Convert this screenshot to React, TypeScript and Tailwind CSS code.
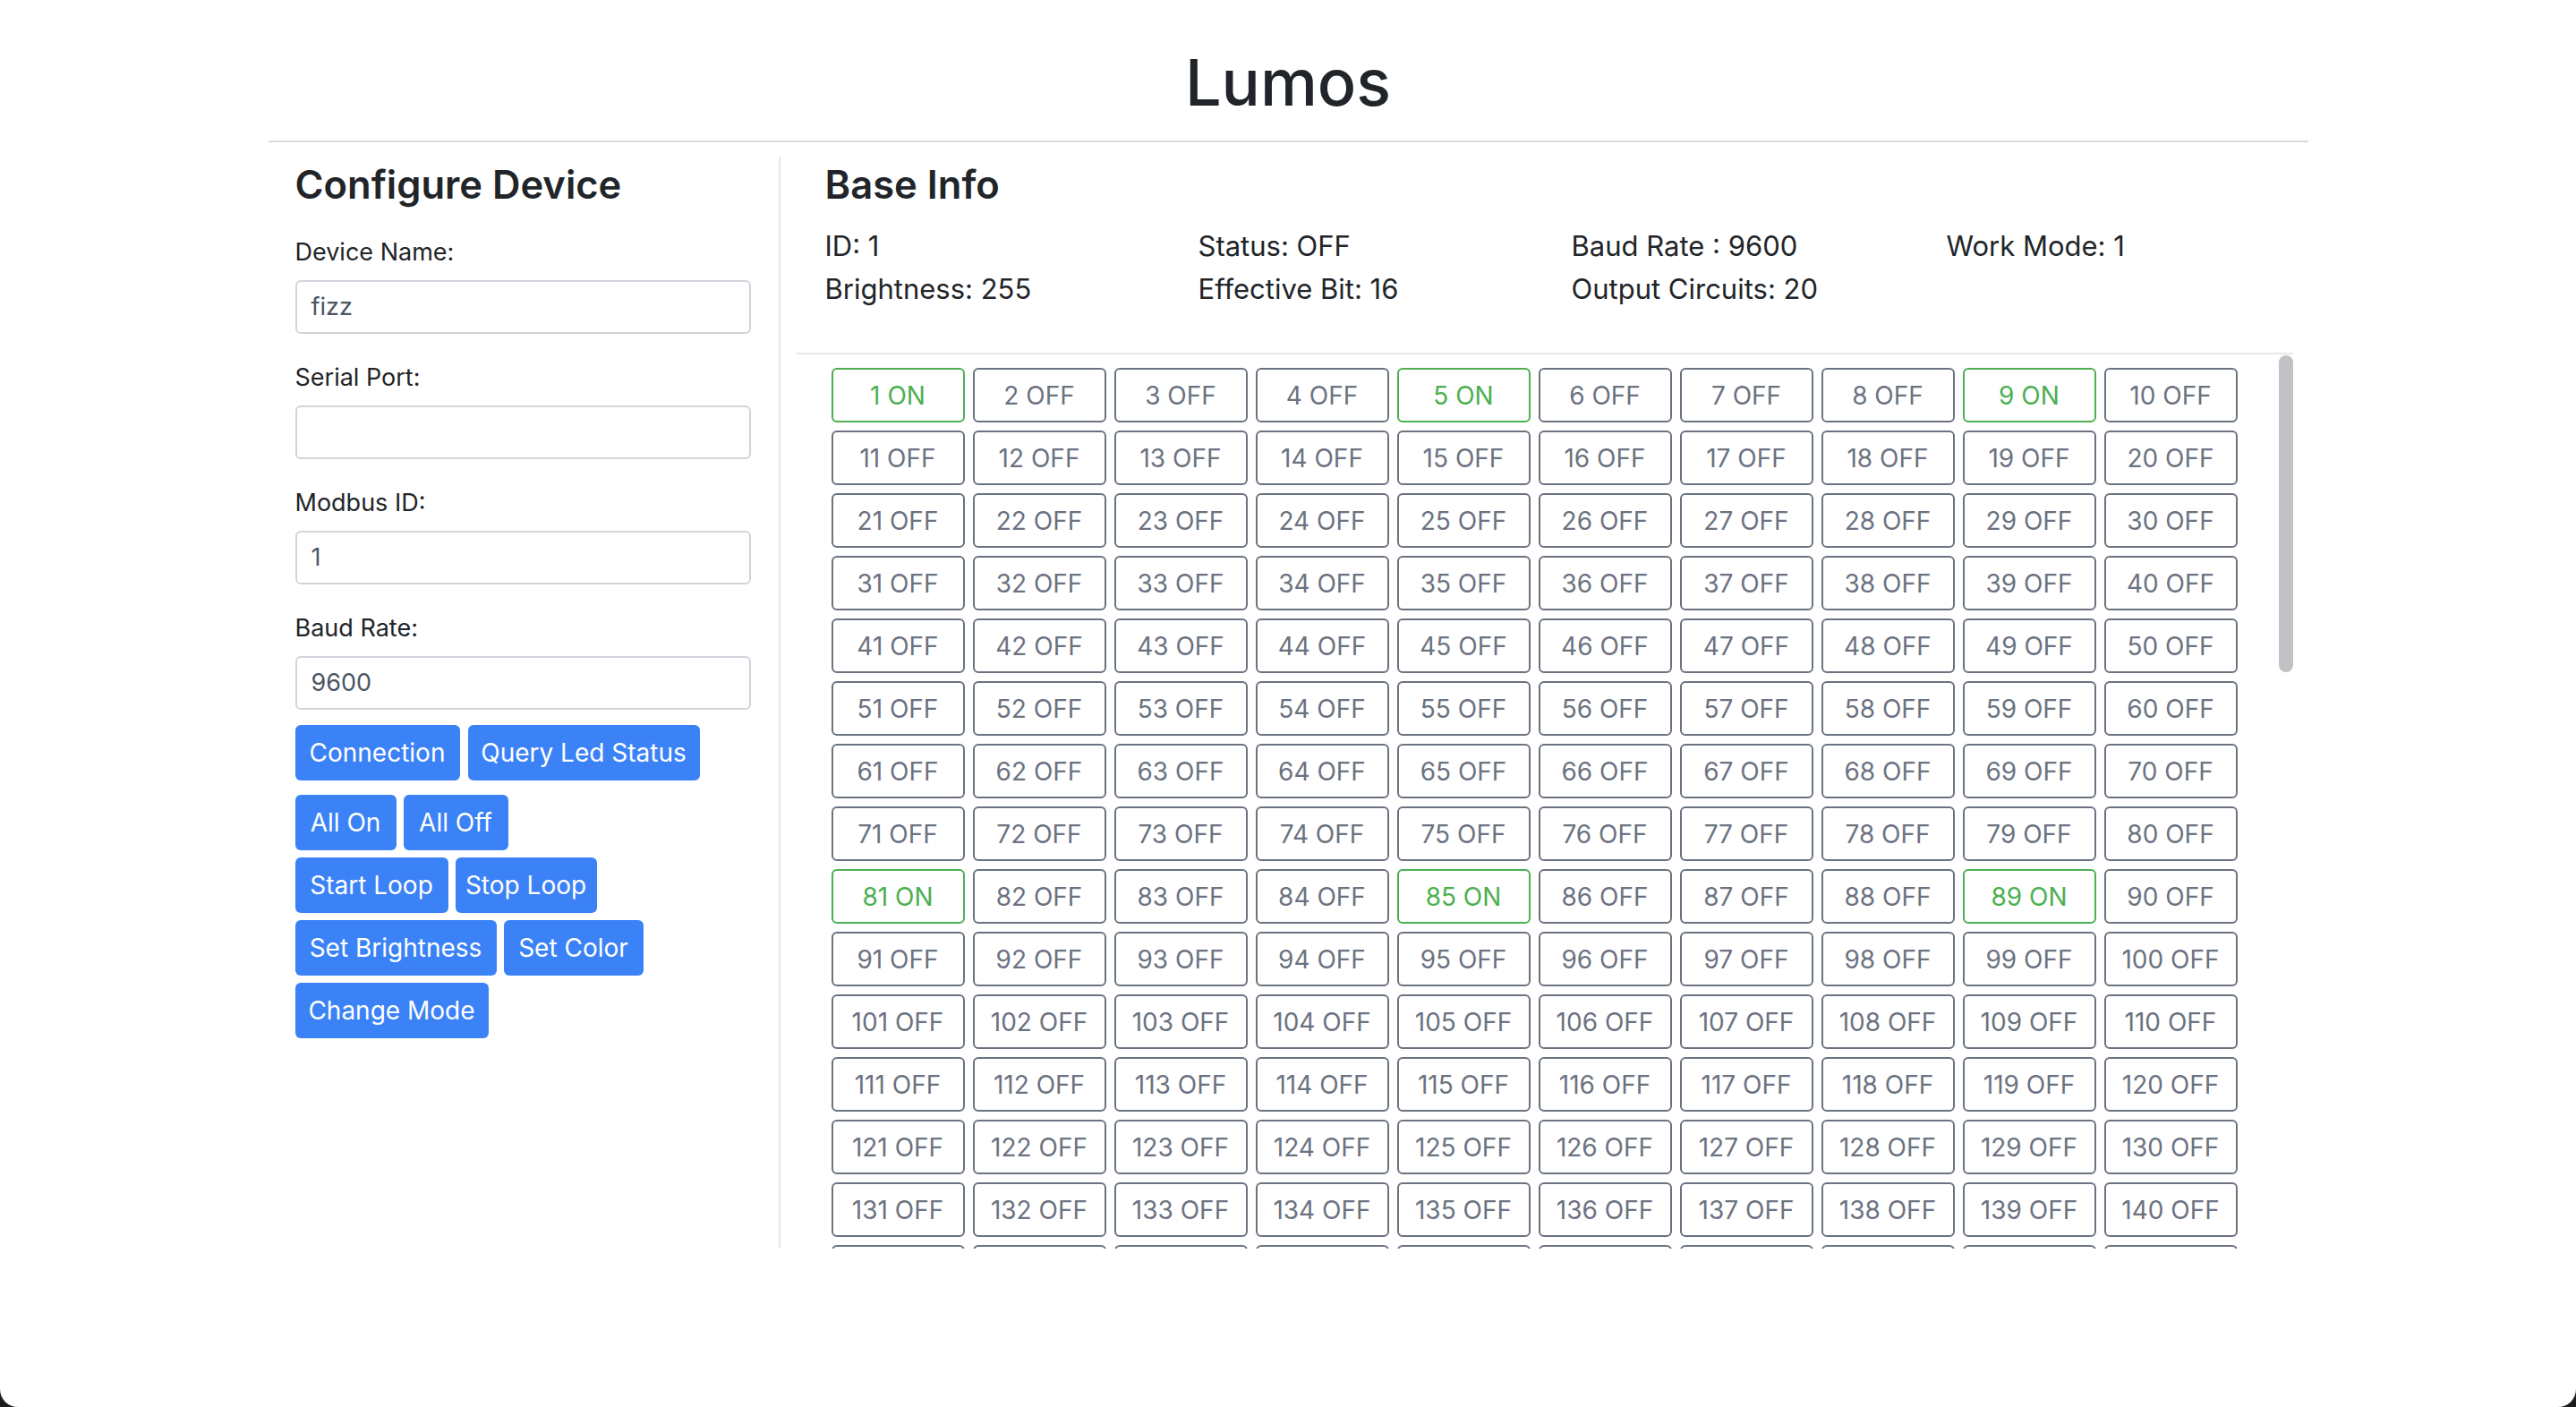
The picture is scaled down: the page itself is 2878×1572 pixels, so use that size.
import React from "react";

const ON = new Set([1, 5, 9, 81, 85, 89]);
const LEDS = Array.from({ length: 400 }, (_, i) => i + 1);

function Field({ label, value }: { label: string; value: string }) {
  return (
    <div className="mb-[28px]">
      <div className="text-[27px] leading-[42px] text-[#212529] mb-[10px]">{label}</div>
      <div className="h-[60px] border-2 border-[#d1d5db] rounded-[6px] pl-[16px] flex items-center text-[27px] text-[#4b5563]">
        {value}
      </div>
    </div>
  );
}

function Btn({ children, w }: { children: React.ReactNode; w: string }) {
  return (
    <div className={`${w} h-[62px] flex items-center justify-center bg-[#3b82f6] text-white text-[28px] rounded-[6px] whitespace-nowrap`}>
      {children}
    </div>
  );
}

export default function App() {
  return (
    <div
      className="relative w-[2878px] h-[1572px] bg-white overflow-hidden text-[#212529]"
      style={{ fontFamily: "Inter, 'Noto Sans', sans-serif" }}
    >
      <div className="mx-auto w-[2279px]">
        <div className="h-[159px] border-b-2 border-[#dcdcdc] flex justify-center pt-[56px]">
          <h1 className="text-[72px] leading-none font-medium">Lumos</h1>
        </div>
        <div className="mt-[16px] flex h-[1220px]">
          <div className="w-[572px] shrink-0 border-r-2 border-[#e5e7eb] pl-[30px] pr-[31px] pt-[6px]">
            <h2 className="text-[43.5px] leading-[50px] font-semibold mb-[30px]">Configure Device</h2>
            <Field label="Device Name:" value="fizz" />
            <Field label="Serial Port:" value="" />
            <Field label="Modbus ID:" value="1" />
            <Field label="Baud Rate:" value="9600" />
            <div className="-mt-[11px] flex flex-col gap-[8px]">
              <div className="flex gap-[9px] mb-[8px]">
                <Btn w="w-[184px]">Connection</Btn>
                <Btn w="w-[259px]">Query Led Status</Btn>
              </div>
              <div className="flex gap-[8px]">
                <Btn w="w-[113px]">All On</Btn>
                <Btn w="w-[117px]">All Off</Btn>
              </div>
              <div className="flex gap-[8px]">
                <Btn w="w-[171px]">Start Loop</Btn>
                <Btn w="w-[158px]">Stop Loop</Btn>
              </div>
              <div className="flex gap-[8px]">
                <Btn w="w-[225px]">Set Brightness</Btn>
                <Btn w="w-[156px]">Set Color</Btn>
              </div>
              <div className="flex gap-[8px]">
                <Btn w="w-[216px]">Change Mode</Btn>
              </div>
            </div>
          </div>
          <div className="flex-1 min-w-0 pl-[18px] pr-[17px] pt-[6px] flex flex-col">
            <div className="pl-[32px]">
              <h2 className="text-[43.5px] leading-[50px] font-semibold">Base Info</h2>
              <div className="mt-[20px] mb-[47px] grid grid-cols-[417px_417px_419px_1fr] text-[31px] leading-[48px] whitespace-nowrap">
                <div>ID: 1</div>
                <div>Status: OFF</div>
                <div>Baud Rate : 9600</div>
                <div>Work Mode: 1</div>
                <div>Brightness: 255</div>
                <div>Effective Bit: 16</div>
                <div>Output Circuits: 20</div>
                <div></div>
              </div>
            </div>
            <div className="relative h-[1001px] border-t-2 border-[#e5e7eb] overflow-hidden">
              <div className="pl-[39px] pt-[15px] grid grid-cols-[repeat(10,149px)] gap-[9px]">
                {LEDS.map((n) => {
                  const on = ON.has(n);
                  return (
                    <div
                      key={n}
                      className={
                        on
                          ? "h-[61px] border-2 border-[#4caf50] text-[#4caf50] rounded-[6px] flex items-center justify-center text-[28px]"
                          : "h-[61px] border-2 border-[#6b7280] text-[#6b7280] rounded-[6px] flex items-center justify-center text-[28px]"
                      }
                    >
                      {n} {on ? "ON" : "OFF"}
                    </div>
                  );
                })}
              </div>
              <div className="absolute right-0 top-[1px] w-[16px] h-[354px] rounded-full bg-[#c2c2c6]" />
            </div>
          </div>
        </div>
      </div>
      <div className="absolute left-0 bottom-0 w-[20px] h-[20px] bg-[#1c1c1a]">
        <div className="w-full h-full bg-white rounded-bl-[20px]" />
      </div>
      <div className="absolute right-0 bottom-0 w-[20px] h-[20px] bg-[#1c1c1a]">
        <div className="w-full h-full bg-white rounded-br-[20px]" />
      </div>
    </div>
  );
}
